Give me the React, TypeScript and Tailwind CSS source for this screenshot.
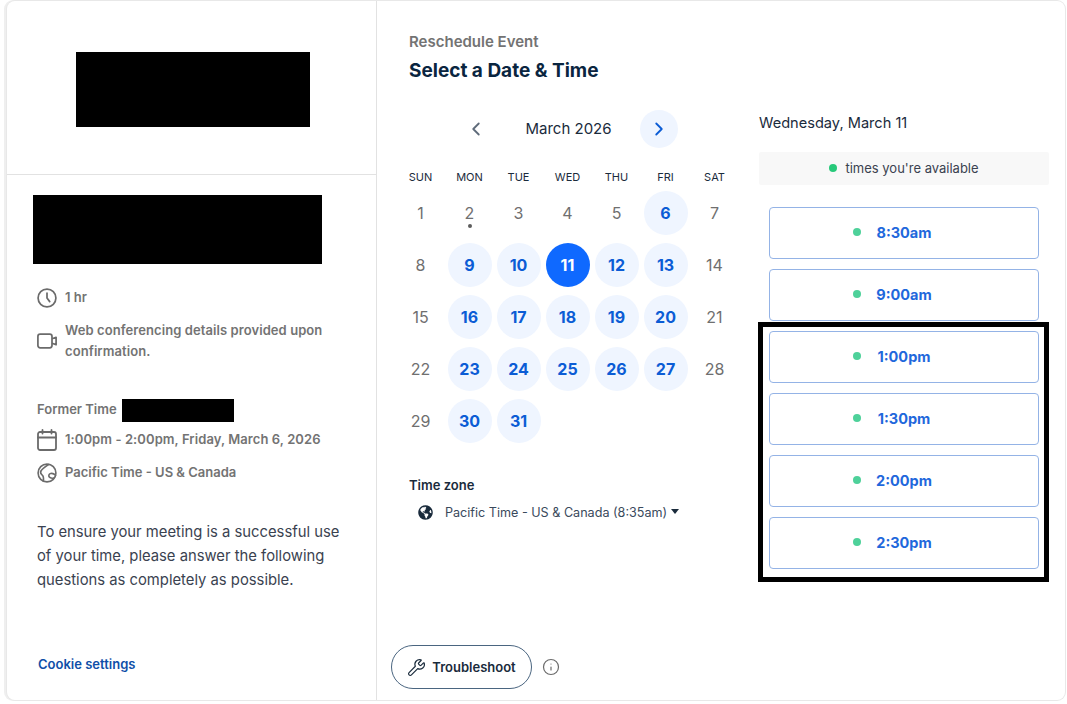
import { ChevronLeft, ChevronRight, Info, Wrench } from "lucide-react";
import { FaGlobeAmericas } from "react-icons/fa";

const weekDays = ["SUN", "MON", "TUE", "WED", "THU", "FRI", "SAT"];
const openDays = [6, 9, 10, 11, 12, 13, 16, 17, 18, 19, 20, 23, 24, 25, 26, 27, 30, 31];
const days = Array.from({ length: 31 }, (_, i) => i + 1);

function DayCell({ day }: { day: number }) {
  const open = openDays.includes(day);
  const picked = day === 11;
  let cls = "text-[#6f6f6f] font-normal";
  if (open) cls = "bg-[#eff5ff] text-[#0b5cd5] font-bold";
  if (picked) cls = "bg-[#0f69ff] text-white font-bold";
  return (
    <div className="flex h-[52px] w-[49px] items-center justify-center">
      <div className={`relative flex h-[44px] w-[44px] items-center justify-center rounded-full text-[16px] ${cls}`}>
        {day}
        {day === 2 && <span className="absolute bottom-[7px] h-[4px] w-[4px] rounded-full bg-[#5c5c5c]" />}
      </div>
    </div>
  );
}

function SlotButton({ time }: { time: string }) {
  return (
    <button className="flex h-[52px] w-[270px] items-center rounded-[4px] border border-[#94b3e6] bg-white text-[14.5px] font-bold text-[#1f68dc]">
      <span className="flex flex-1 justify-end">
        <span className="mr-[15px] mb-[2px] h-[8px] w-[8px] rounded-full bg-[#4ed19a]" />
      </span>
      <span className="w-[56px] text-center">{time}</span>
      <span className="flex-1" />
    </button>
  );
}

export default function App() {
  return (
    <div className="h-[704px] w-[1067px] overflow-hidden bg-white pt-[1px] pl-[7px] font-['Inter','Liberation_Sans',sans-serif]">
      <div className="flex h-[699px] w-[1058px] rounded-[8px] bg-white shadow-[0_0_0_1px_#e8e8e8,-2px_0_0_1px_#efefef]">
        {/* left summary */}
        <aside className="flex w-[370px] flex-col border-r border-[#e2e2e2]">
          <div className="h-[174px] border-b border-[#e2e2e2] pt-[51px] pl-[69px]">
            <div className="h-[75px] w-[234px] bg-black" />
          </div>
          <div className="flex flex-1 flex-col pl-[26px]">
            <div className="mt-[20px] h-[69px] w-[289px] bg-black" />

            <div className="mt-[24px] ml-[4px] flex items-center gap-[8px] text-[13px] font-semibold text-[#737373]">
              <svg width="20" height="20" viewBox="0 0 22 22" fill="none" stroke="#6b6b6b" strokeWidth="1.9" strokeLinecap="round" className="shrink-0">
                <circle cx="11" cy="11" r="9.8" />
                <path d="M11 5.500V11l3 4" />
              </svg>
              <span>1 hr</span>
            </div>

            <div className="mt-[12px] ml-[4px] flex items-center gap-[8px] text-[13px] leading-[21px] font-semibold tracking-[0.08px] text-[#737373]">
              <svg width="20" height="20" viewBox="0 0 22 22" fill="none" stroke="#6b6b6b" strokeWidth="1.9" strokeLinejoin="round" className="shrink-0">
                <rect x="1" y="3.500" width="15.500" height="15" rx="2.500" />
                <path d="M16.500 8.500l4.500-1.500v8l-4.500-1.500" />
              </svg>
              <span className="w-[270px]">Web conferencing details provided upon confirmation.</span>
            </div>

            <div className="mt-[37px] flex h-[23px] items-center text-[13px] font-semibold text-[#737373]">
              <span className="mb-[2px] w-[89px] pl-[4px]">Former Time</span>
              <div className="h-[23px] w-[112px] bg-black" />
            </div>

            <div className="mt-[8px] ml-[4px] flex items-center gap-[8px] text-[13px] font-semibold tracking-[0.08px] text-[#737373]">
              <svg width="20" height="22" viewBox="0 0 20 22" fill="none" stroke="#6b6b6b" strokeWidth="1.8" strokeLinecap="round" className="-my-[1px] shrink-0">
                <rect x="1" y="3" width="18" height="18" rx="2" />
                <path d="M1 8.500h18M5.500 1v3.500M14.500 1v3.500" />
              </svg>
              <span>1:00pm - 2:00pm, Friday, March 6, 2026</span>
            </div>

            <div className="mt-[13px] ml-[4px] flex items-center gap-[8px] text-[13px] font-semibold text-[#737373]">
              <svg width="20" height="20" viewBox="0 0 22 22" fill="none" stroke="#6b6b6b" strokeWidth="1.8" strokeLinecap="round" strokeLinejoin="round" className="shrink-0">
                <circle cx="11" cy="11" r="9.800" />
                <path d="M13 1.500C10 3.500 6 6 4.500 8.500c-1 2-.5 3.500 1 4.500 1.500 1 2 3 1.500 7" />
                <path d="M20.500 13.500c-1.500-1.500-3.500-2.500-5.500-2-2 .5-2.500 2.500-1.500 4 .8 1 2.500 1.500 5 1" />
              </svg>
              <span>Pacific Time - US &amp; Canada</span>
            </div>

            <p className="mt-[37px] w-[315px] pl-[4px] text-[14.8px] leading-[24px] text-[#3a4250]">
              To ensure your meeting is a successful use of your time, please answer the following questions as completely as possible.
            </p>

            <a className="mt-auto mb-[26px] pl-[5px] text-[13px] font-semibold text-[#0f4fa8]">Cookie settings</a>
          </div>
        </aside>

        {/* calendar */}
        <main className="relative flex flex-1 flex-col pl-[32px]">
          <div className="mt-[30px] text-[15px] font-semibold text-[#737373]">Reschedule Event</div>
          <h1 className="mt-[3px] text-[19px] font-bold text-[#0a2540]">Select a Date &amp; Time</h1>

          <div className="flex">
            <section className="w-[343px]">
              <div className="mt-[25px] flex h-[38px] items-center pl-[58px]">
                <ChevronLeft size={22} strokeWidth={2} className="-ml-[2px] text-[#5f6b7a]" />
                <span className="w-[153px] pl-[10px] text-center text-[15px] text-[#1a2b3c]">March 2026</span>
                <span className="flex h-[38px] w-[38px] items-center justify-center rounded-full bg-[#eff5ff]">
                  <ChevronRight size={22} strokeWidth={2} className="text-[#0b5cd5]" />
                </span>
              </div>

              <div className="mt-[20px] -ml-[13px] grid w-[343px] grid-cols-[repeat(7,49px)]">
                {weekDays.map((d) => (
                  <div key={d} className="flex h-[18px] items-center justify-center text-[11px] text-[#1a2b3c]">
                    {d}
                  </div>
                ))}
                <div className="col-span-7 h-[1px]" />
                {days.map((d) => (
                  <DayCell key={d} day={d} />
                ))}
              </div>

              <div className="mt-[29px] text-[13px] font-semibold text-[#1a2b3c]">Time zone</div>
              <div className="mt-[8px] ml-[9px] flex items-center text-[12.6px] text-[#3a4a5c]">
                <FaGlobeAmericas size={15} className="mr-[12px] text-[#1a2b3c]" />
                <span>Pacific Time - US &amp; Canada (8:35am)</span>
                <svg width="8" height="5" viewBox="0 0 8 5" className="mb-[2px] ml-[4px]">
                  <path d="M0 0h8L4 5z" fill="#1a2b3c" />
                </svg>
              </div>
            </section>

            {/* time slots */}
            <section className="w-[290px] pl-[7px]">
              <div className="mt-[28px] text-[14.6px] text-[#1a2b3c]">Wednesday, March 11</div>
              <div className="mt-[17px] flex h-[33px] w-[290px] items-center justify-center gap-[8px] rounded-[2px] bg-[#f8f8f8] text-[13px] text-[#3a4250]">
                <span className="h-[8px] w-[8px] rounded-full bg-[#27c97a]" />
                times you're available
              </div>
              <div className="mt-[22px] flex w-[290px] flex-col gap-[10px] pl-[10px]">
                <SlotButton time="8:30am" />
                <SlotButton time="9:00am" />
                <div className="relative flex flex-col gap-[10px]">
                  <div className="pointer-events-none absolute -top-[9px] right-0 -bottom-[13px] -left-[11px] border-[5px] border-black" />
                  <SlotButton time="1:00pm" />
                  <SlotButton time="1:30pm" />
                  <SlotButton time="2:00pm" />
                  <SlotButton time="2:30pm" />
                </div>
              </div>
            </section>
          </div>

          <div className="absolute bottom-[11px] left-[14px] flex items-center gap-[10px]">
            <button className="flex h-[44px] w-[141px] items-center justify-center gap-[6px] rounded-full border border-[#4a6580] pt-[1px] text-[13px] font-semibold text-[#1a2b3c]">
              <Wrench size={19} strokeWidth={1.5} />
              Troubleshoot
            </button>
            <Info size={18} strokeWidth={1.6} className="text-[#6b6b6b]" />
          </div>
        </main>
      </div>
    </div>
  );
}
